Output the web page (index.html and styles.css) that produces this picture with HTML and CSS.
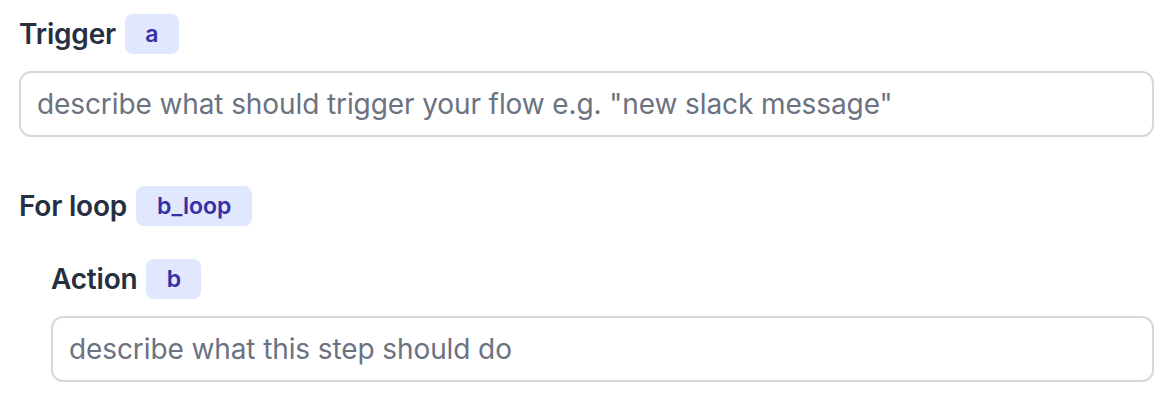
FILE: index.html
```html
<!DOCTYPE html>
<html>
<head>
<meta charset="utf-8">
<link rel="stylesheet" href="styles.css">
</head>
<body>
<div class="flow">
  <div class="step">
    <div class="head"><span class="label">Trigger</span><span class="badge badge-a">a</span></div>
    <div class="input">describe what should trigger your flow e.g. "new slack message"</div>
  </div>
  <div class="loop">
    <div class="head"><span class="label">For loop</span><span class="badge badge-loop">b_loop</span></div>
    <div class="step nested">
      <div class="head"><span class="label">Action</span><span class="badge badge-b">b</span></div>
      <div class="input">describe what this step should do</div>
    </div>
  </div>
</div>
</body>
</html>
```
FILE: styles.css
```css
html, body { margin: 0; padding: 0; background: #ffffff; }
body { font-family: Inter, "Noto Sans", sans-serif; }
.flow { padding: 14px 18px 0 19px; display: flex; flex-direction: column; }
.head { display: flex; align-items: center; gap: 9px; height: 40px; }
.label { font-size: 28px; font-weight: 600; color: #273041; letter-spacing: -0.2px; }
.badge { display: inline-flex; align-items: center; justify-content: center; height: 40px; border-radius: 8px; background: #e0e7ff; color: #3730a3; font-size: 23px; font-weight: 600; padding: 0 21px; box-sizing: border-box; }
.badge-a { width: 54px; padding: 0; }
.badge-b { width: 55px; padding: 0; }
.input { margin-top: 17px; height: 66px; box-sizing: border-box; border: 2px solid #d6d8dd; border-radius: 12px; display: flex; align-items: center; padding: 0 16px; font-size: 28px; letter-spacing: -0.1px; color: #6b7280; }
.loop { margin-top: 49px; }
.nested { margin-top: 33px; margin-left: 32px; }
```
